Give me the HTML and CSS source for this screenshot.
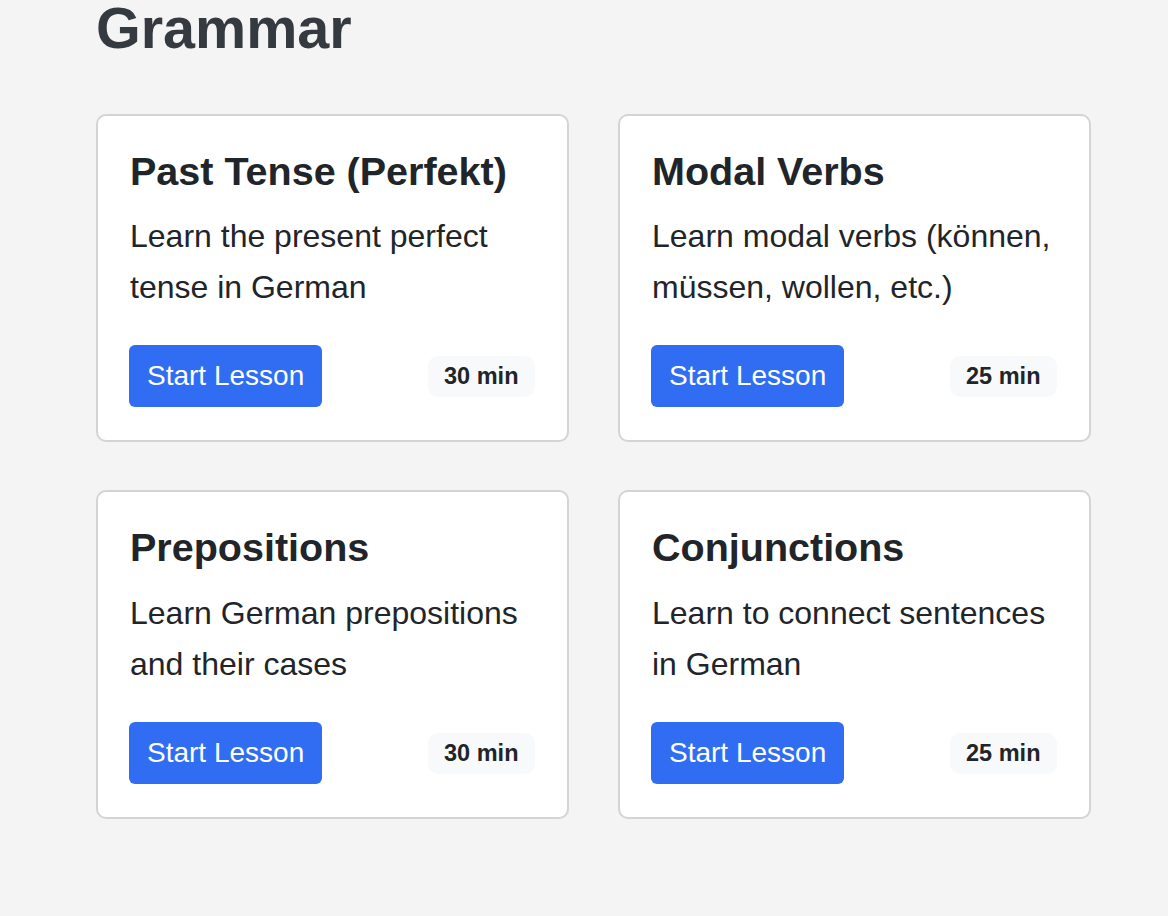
FILE: index.html
```html
<!DOCTYPE html>
<html lang="en">
<head>
<meta charset="utf-8">
<title>Grammar</title>
<link rel="stylesheet" href="styles.css">
</head>
<body>
<main class="page">
  <h1 class="section-title">Grammar</h1>
  <div class="lesson-grid">
    <div class="card">
      <h3 class="card-title">Past Tense (Perfekt)</h3>
      <p class="card-text">Learn the present perfect tense in German</p>
      <div class="card-footer">
        <button class="btn">Start Lesson</button>
        <span class="badge">30 min</span>
      </div>
    </div>
    <div class="card">
      <h3 class="card-title">Modal Verbs</h3>
      <p class="card-text">Learn modal verbs (können, müssen, wollen, etc.)</p>
      <div class="card-footer">
        <button class="btn">Start Lesson</button>
        <span class="badge">25 min</span>
      </div>
    </div>
    <div class="card">
      <h3 class="card-title">Prepositions</h3>
      <p class="card-text">Learn German prepositions and their cases</p>
      <div class="card-footer">
        <button class="btn">Start Lesson</button>
        <span class="badge">30 min</span>
      </div>
    </div>
    <div class="card">
      <h3 class="card-title">Conjunctions</h3>
      <p class="card-text">Learn to connect sentences in German</p>
      <div class="card-footer">
        <button class="btn">Start Lesson</button>
        <span class="badge">25 min</span>
      </div>
    </div>
  </div>
</main>
</body>
</html>
```

FILE: styles.css
```css
html, body {
  margin: 0;
  padding: 0;
  background: #f4f4f4;
  font-family: "Liberation Sans", Arial, sans-serif;
  color: #212529;
}

.page {
  padding: 0 0 0 96px;
}

.section-title {
  margin: 0 0 56px 0;
  font-size: 57.5px;
  line-height: 1;
  font-weight: 700;
  color: #343a40;
}

.lesson-grid {
  display: grid;
  grid-template-columns: 473px 473px;
  column-gap: 49px;
  row-gap: 48px;
}

.card {
  background: #ffffff;
  border: 2px solid #d4d4d4;
  border-radius: 10px;
  padding: 32px;
  display: flex;
  flex-direction: column;
}

.card-title {
  margin: 0 0 16px 0;
  font-size: 39.5px;
  line-height: 1.2;
  font-weight: 700;
  color: #212529;
}

.card-text {
  margin: 0 0 32px 0;
  font-size: 32px;
  line-height: 1.6;
  color: #212529;
}

.card-footer {
  display: flex;
  align-items: center;
  justify-content: space-between;
}

.btn {
  font-family: "Liberation Sans", Arial, sans-serif;
  font-size: 28px;
  line-height: 32px;
  padding: 15px 18px;
  margin-left: -1px;
  background: #316df3;
  color: #ffffff;
  border: none;
  border-radius: 6px;
}

.badge {
  font-size: 23.5px;
  line-height: 27px;
  font-weight: 700;
  padding: 7px 16.5px;
  background: #f8f9fa;
  border-radius: 10px;
  color: #212529;
}

.card-footer {
  margin-bottom: 1px;
}
```
